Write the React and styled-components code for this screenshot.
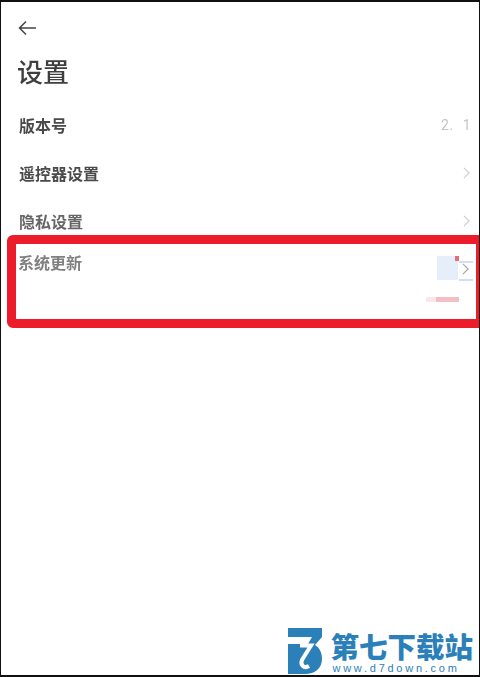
import styled, { createGlobalStyle } from 'styled-components';

const GlobalStyle = createGlobalStyle`
    html, body {
        margin: 0;
        padding: 0;
        background: #fff;
    }
`

const Page = styled.div`
    position: relative;
    width: 480px;
    height: 677px;
    box-sizing: border-box;
    overflow: hidden;
    background: #fff;
    border: 1px solid #111;
    border-width: 2px 1px;
    font-family: "Noto Sans CJK SC", "Noto Sans", sans-serif;
`

const Header = styled.header`
    padding: 18px 0 0 17px;
`

const BackButton = styled.div`
    display: flex;
    width: 18px;
    height: 16px;
    color: #444;
`

const Title = styled.h1`
    margin: 16px 0 0 -1px;
    font-size: 26px;
    line-height: 38px;
    font-weight: 500;
    color: #3f3f3f;
    filter: blur(0.4px);
`

const List = styled.div`
    margin-top: 11px;
    padding-left: 18px;
    padding-right: 8px;
`

const Row = styled.div`
    display: flex;
    align-items: center;
    justify-content: space-between;
    height: 48px;
`

const Label = styled.span`
    font-size: 16px;
    font-weight: 700;
    color: ${(props) => props.$color || '#4a4a4a'};
    filter: blur(0.4px);
`

const Value = styled.span`
    font-family: "Roboto", sans-serif;
    font-size: 14px;
    letter-spacing: 0.5px;
    word-spacing: 5px;
    color: #c4c4c4;
    filter: blur(0.5px);
`

const Chevron = styled.svg`
    width: 7px;
    height: 12px;
    margin-right: 1px;
    fill: none;
    stroke: ${(props) => props.$color || '#cfcfcf'};
    stroke-width: 1.4;
`

const Highlight = styled.section`
    position: relative;
    box-sizing: border-box;
    height: 93px;
    margin: -10px 0 0 6px;
    padding: 6px 0 0 2px;
    border: solid #ec1c2a;
    border-width: 9px 3px 9px 9px;
    border-radius: 6px 0 0 6px;
`

const SmudgeBlock = styled.div`
    position: absolute;
    left: 421px;
    top: 12px;
    width: 21px;
    height: 24px;
    background: #e6eefa;
`

const SmudgeDot = styled.div`
    position: absolute;
    left: 439px;
    top: 12px;
    width: 4px;
    height: 5px;
    background: #ea6a78;
`

const SmudgeLine = styled.div`
    position: absolute;
    left: 443px;
    top: ${(props) => props.$top}px;
    width: 14px;
    height: 2px;
    background: #cfe0f5;
`

const SmudgeBar = styled.div`
    position: absolute;
    left: 410px;
    top: 53px;
    width: 33px;
    height: 5px;
    background: linear-gradient(90deg, #fbe6e8 0 30%, #f3bfc4 30% 100%);
`

const HighlightChevron = styled.div`
    position: absolute;
    left: 446px;
    top: 19px;
    display: flex;
`

const Watermark = styled.div`
    position: absolute;
    right: 6px;
    bottom: 0;
    display: flex;
    align-items: flex-end;
    gap: 7px;
    color: #2b80b9;
`

const WatermarkText = styled.div`
    display: flex;
    flex-direction: column;
    align-items: flex-start;
`

const Brand = styled.div`
    font-size: 28.5px;
    line-height: 32px;
    font-weight: 900;
    white-space: nowrap;
`

const Site = styled.div`
    font-family: "Liberation Sans", sans-serif;
    font-size: 11px;
    line-height: 13px;
    padding-left: 2px;
    letter-spacing: 2.75px;
    color: #2b80b9;
    white-space: nowrap;
`

const BackIcon = () => (
    <svg width="18" height="16" viewBox="0 0 18 16" fill="none" stroke="currentColor" strokeWidth="1.5">
        <path d="M18 8H1.5M8 1.5 1.5 8 8 14.5" />
    </svg>
)

const ChevronIcon = ({ color }) => (
    <Chevron viewBox="0 0 8 14" $color={color}>
        <path d="M1 1l6 6-6 6" />
    </Chevron>
)

const LogoIcon = () => (
    <svg width="35" height="47" viewBox="0 0 35 47">
        <path fill="#2b80b9" d="M0 0H34V9L27 17C32 20 34 25 34 31 34 40 27 46 17 46H0V16H20L24 9H0Z" />
        <path fill="none" stroke="#fff" strokeWidth="4" d="M12 17.5H23L14 32C12 37 16 41 21 38" />
    </svg>
)

const App = () => {
    return (
        <Page>
            <GlobalStyle />
            <Header>
                <BackButton>
                    <BackIcon />
                </BackButton>
                <Title>设置</Title>
            </Header>
            <List>
                <Row>
                    <Label>版本号</Label>
                    <Value>2. 1</Value>
                </Row>
                <Row>
                    <Label>遥控器设置</Label>
                    <ChevronIcon />
                </Row>
                <Row>
                    <Label $color="#666">隐私设置</Label>
                    <ChevronIcon />
                </Row>
            </List>
            <Highlight>
                <Label $color="#808080">系统更新</Label>
                <SmudgeBlock />
                <SmudgeDot />
                <SmudgeLine $top={17} />
                <SmudgeLine $top={35} />
                <SmudgeBar />
                <HighlightChevron>
                    <ChevronIcon color="#a8a8a8" />
                </HighlightChevron>
            </Highlight>
            <Watermark>
                <LogoIcon />
                <WatermarkText>
                    <Brand>第七下载站</Brand>
                    <Site>www.d7down.com</Site>
                </WatermarkText>
            </Watermark>
        </Page>
    )
}

export default App
